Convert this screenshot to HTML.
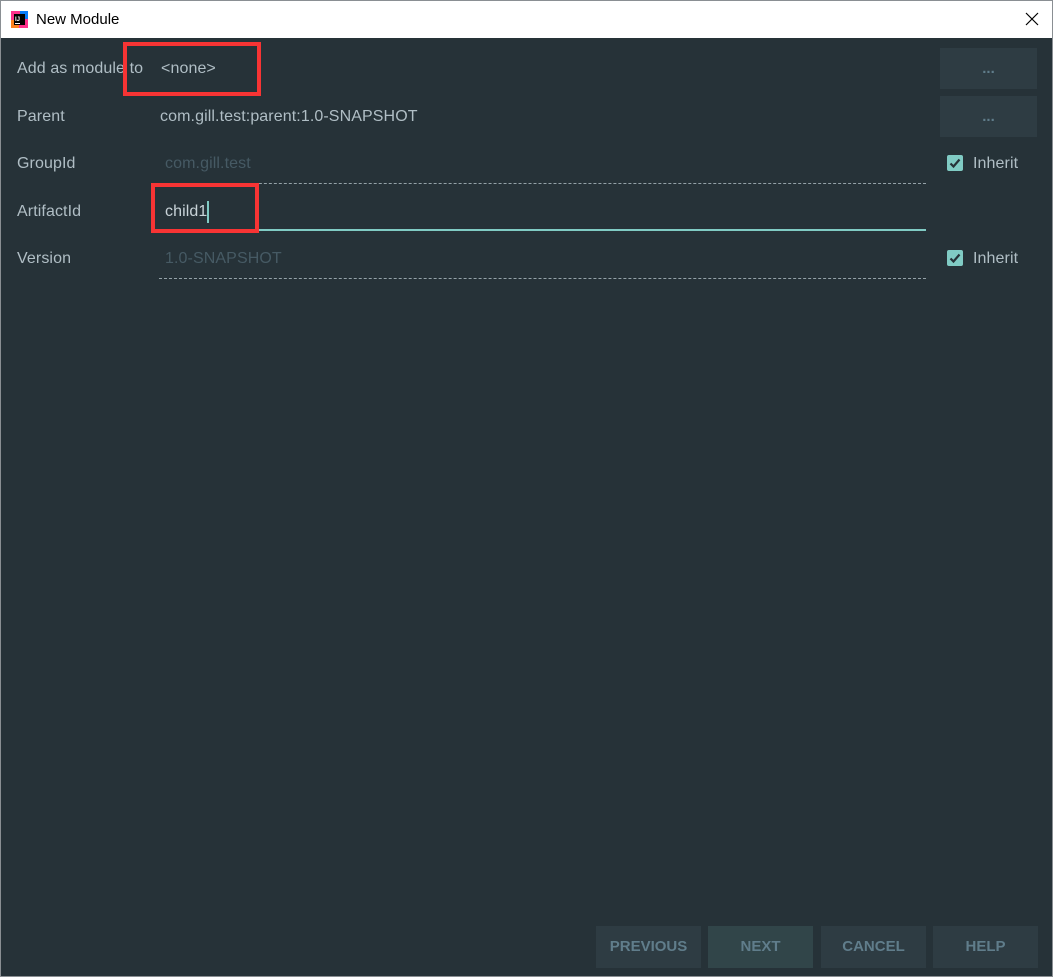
<!DOCTYPE html>
<html><head><style>
body{margin:0;width:1053px;height:977px;overflow:hidden;font-family:"Liberation Sans","Microsoft YaHei",sans-serif;}
.win{position:absolute;left:0;top:0;width:1051px;height:975px;border:1px solid #8a8f93;background:#263238;}
.title{position:absolute;left:0;top:0;width:1051px;height:37px;background:#fff;}
.title span{position:absolute;left:35px;top:10px;font-size:15px;color:#000;}
.t{position:absolute;font-size:16px;color:#b0bec5;white-space:nowrap;letter-spacing:.1px;}
.dim{color:#465a64;}
.dot{position:absolute;left:158px;width:767px;border-top:1px dashed #b0bec5;opacity:.8;}
.btn{position:absolute;background:#2e3c43;color:#607d8b;font-weight:bold;font-size:15px;text-align:center;line-height:42px;}
.red{position:absolute;border:4px solid #f73434;}
.cb{position:absolute;width:16px;height:16px;background:#80cbc4;border-radius:2px;}
</style></head><body>
<div class="win">
<div class="title">
<svg style="position:absolute;left:10px;top:10px" width="17" height="17"><rect width="17" height="17" fill="#ff318c"/><rect x="0" y="9" width="8" height="8" fill="#fc801d"/><rect x="9" y="0" width="8" height="8" fill="#087cfa"/><rect x="3" y="3" width="11" height="11" fill="#000"/><text x="4" y="10" font-size="6" fill="#fff" font-family="Liberation Sans" font-weight="bold">IJ</text><rect x="4" y="12" width="5" height="1" fill="#fff"/></svg>
<span>New Module</span>
<svg style="position:absolute;left:1024px;top:11px" width="14" height="14"><path d="M1 1L13 13M13 1L1 13" stroke="#000" stroke-width="1.2"/></svg>
</div>
<div class="t" style="left:16px;top:59px">Add as module to</div>
<div class="t" style="left:160px;top:59px">&lt;none&gt;</div>
<div class="t" style="left:16px;top:107px">Parent</div>
<div class="t" style="left:159px;top:107px">com.gill.test:parent:1.0-SNAPSHOT</div>
<div class="t" style="left:16px;top:154px">GroupId</div>
<div class="t dim" style="left:164px;top:154px">com.gill.test</div>
<div class="dot" style="top:182px"></div>
<div class="t" style="left:16px;top:202px">ArtifactId</div>
<div class="t" style="left:164px;top:202px;color:#c8d3d8">child1</div>
<div style="position:absolute;left:206px;top:200px;width:2px;height:22px;background:#80cbc4"></div>
<div style="position:absolute;left:158px;top:228px;width:767px;height:2px;background:#80cbc4"></div>
<div class="t" style="left:16px;top:249px">Version</div>
<div class="t dim" style="left:164px;top:249px">1.0-SNAPSHOT</div>
<div class="dot" style="top:277px"></div>
<div class="btn" style="left:939px;top:47px;width:97px;height:41px;line-height:41px;">...</div>
<div class="btn" style="left:939px;top:95px;width:97px;height:41px;line-height:41px;">...</div>
<div class="cb" style="left:946px;top:154px"></div><svg style="position:absolute;left:946px;top:154px" width="16" height="16"><path d="M3.5 8.5L6.5 11.5L12.5 4.5" stroke="#263238" stroke-width="2.2" fill="none"/></svg>
<div class="t" style="left:972px;top:154px">Inherit</div>
<div class="cb" style="left:946px;top:249px"></div><svg style="position:absolute;left:946px;top:249px" width="16" height="16"><path d="M3.5 8.5L6.5 11.5L12.5 4.5" stroke="#263238" stroke-width="2.2" fill="none"/></svg>
<div class="t" style="left:972px;top:249px">Inherit</div>
<div class="red" style="left:122px;top:41px;width:130px;height:46px"></div>
<div class="red" style="left:150px;top:182px;width:100px;height:42px"></div>
<div class="btn" style="left:595px;top:925px;width:105px;height:42px">PREVIOUS</div>
<div class="btn" style="left:707px;top:925px;width:105px;height:42px;background:#314549">NEXT</div>
<div class="btn" style="left:820px;top:925px;width:105px;height:42px">CANCEL</div>
<div class="btn" style="left:932px;top:925px;width:105px;height:42px">HELP</div>
</div>
</body></html>
